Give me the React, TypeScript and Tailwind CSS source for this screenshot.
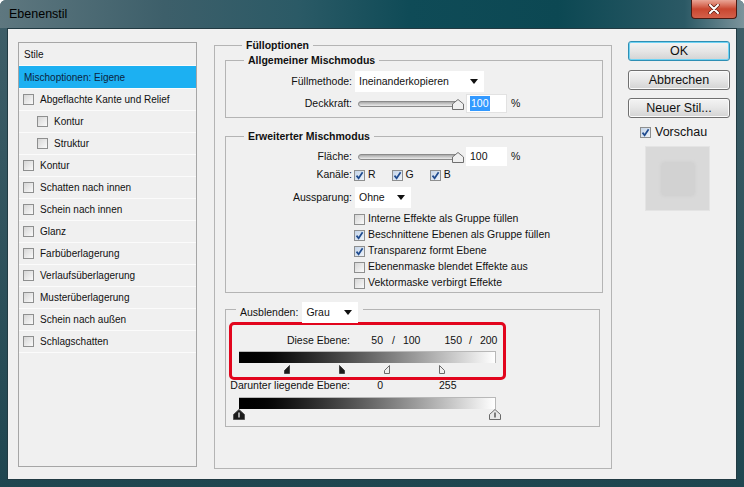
import React from 'react';

const F = "font-['Liberation_Sans',Arial,sans-serif]";

function Check({ on = false, className = '' }: { on?: boolean; className?: string }) {
  return (
    <span
      className={`relative inline-block w-[11px] h-[11px] shrink-0 border border-[#8e8f8f] ${
        on ? 'bg-linear-to-br from-[#c4d4e8] to-[#eef3f9]' : 'bg-linear-to-br from-[#d6d6d6] to-[#fafafa]'
      } ${className}`}
    >
      {on && (
        <svg viewBox="0 0 9 9" className="absolute inset-0 w-[9px] h-[9px]">
          <path d="M1.5 4.6 L3.6 7.2 L7.6 1.2" fill="none" stroke="#1f4b8f" strokeWidth="1.7" />
        </svg>
      )}
    </span>
  );
}

function Select({ value, className = '' }: { value: string; className?: string }) {
  return (
    <div className={`flex items-center h-[21px] bg-white pl-[4px] pr-[6px] ${className}`}>
      <span className="text-[10.5px]">{value}</span>
      <svg className="ml-auto" width="8" height="5" viewBox="0 0 8 5">
        <path d="M0 0 H8 L4 5 Z" fill="#111" />
      </svg>
    </div>
  );
}

function Slider() {
  return (
    <div className="relative flex items-center w-[106px] h-[14px]">
      <div className="w-[100px] h-[6px] rounded-full border border-[#8a8a8a] bg-linear-to-b from-[#a9a9a9] to-[#ececec]" />
      {/* thumb */}
      <svg className="absolute left-[94px] top-[2px]" width="12" height="11" viewBox="0 0 12 11">
        <path d="M6 0.5 L11.5 5 L11.5 10.5 L0.5 10.5 L0.5 5 Z" fill="#efefef" stroke="#6f6f6f" />
      </svg>
    </div>
  );
}

function Half({ left, dark, flip }: { left: number; dark?: boolean; flip?: boolean }) {
  // flip = vertical edge on the left side
  const d = flip ? 'M0.5 0.5 L0.5 8.5 L5.5 8.5 L5.5 5.5 Z' : 'M5.5 0.5 L5.5 8.5 L0.5 8.5 L0.5 5.5 Z';
  return (
    <svg className="absolute top-0" style={{ left }} width="6" height="9" viewBox="0 0 6 9">
      <path d={d} fill={dark ? '#1c1c1c' : '#efefef'} stroke={dark ? '#444' : '#6a6a6a'} />
    </svg>
  );
}

function Thumb({ left, dark }: { left: number; dark?: boolean }) {
  return (
    <svg className="absolute top-0" style={{ left }} width="12" height="11" viewBox="0 0 12 11">
      <path d="M6 0.5 L11.5 5.5 L11.5 10.5 L0.5 10.5 L0.5 5.5 Z" fill={dark ? '#1a1a1a' : '#e8e8e8'} stroke={dark ? '#555' : '#6a6a6a'} />
      <path d="M6 3.5 V8.5" stroke={dark ? '#fff' : '#333'} strokeWidth="1.2" />
    </svg>
  );
}

const styles: { label: string; sub?: boolean }[] = [
  { label: 'Abgeflachte Kante und Relief' },
  { label: 'Kontur', sub: true },
  { label: 'Struktur', sub: true },
  { label: 'Kontur' },
  { label: 'Schatten nach innen' },
  { label: 'Schein nach innen' },
  { label: 'Glanz' },
  { label: 'Farbüberlagerung' },
  { label: 'Verlaufsüberlagerung' },
  { label: 'Musterüberlagerung' },
  { label: 'Schein nach außen' },
  { label: 'Schlagschatten' },
];

const options: { label: string; on: boolean }[] = [
  { label: 'Interne Effekte als Gruppe füllen', on: false },
  { label: 'Beschnittene Ebenen als Gruppe füllen', on: true },
  { label: 'Transparenz formt Ebene', on: true },
  { label: 'Ebenenmaske blendet Effekte aus', on: false },
  { label: 'Vektormaske verbirgt Effekte', on: false },
];

function Button({ children, primary }: { children: React.ReactNode; primary?: boolean }) {
  return (
    <div
      className={`h-[20px] w-[102px] flex items-center justify-center rounded-[3px] border text-[12.5px] text-[#111] bg-linear-to-b from-[#f4f4f4] via-[#e6e6e6] to-[#d3d3d3] ${
        primary ? 'border-[#2f8fb4] shadow-[inset_0_0_0_1px_#6fd3f4]' : 'border-[#707070] shadow-[inset_0_0_0_1px_#fbfbfb]'
      }`}
    >
      {children}
    </div>
  );
}

export default function App() {
  return (
    <div className={`${F} w-[744px] h-[487px] flex flex-col overflow-hidden rounded-t-[6px] bg-linear-to-b from-[#3f5f69] to-[#1f4650] text-[#111] select-none`}>
      {/* title bar */}
      <div className="h-[28px] shrink-0 flex items-start bg-[linear-gradient(90deg,#5e777f_0%,#3d5f6a_22%,#2b5a66_40%,#0f4b57_55%,#0c4853_75%,#2b5965_92%,#7c949c_100%)]">
        <span className="pl-[9px] pt-[5px] text-[12.5px] text-black">Ebenenstil</span>
        <div className="ml-auto mr-[7px] w-[46px] h-[19px] flex items-center justify-center rounded-b-[4px] border border-t-0 border-[#4a1a12] bg-linear-to-b from-[#e9a596] via-[#c9462f] to-[#d4604a]">
          <svg width="12" height="10" viewBox="0 0 12 10">
            <path d="M2 1 L10 9 M10 1 L2 9" stroke="#5a1a10" strokeWidth="3.4" strokeLinecap="round" />
            <path d="M2 1 L10 9 M10 1 L2 9" stroke="#fff" strokeWidth="2" strokeLinecap="round" />
          </svg>
        </div>
      </div>

      {/* client */}
      <div className="flex-1 flex px-[7px] pb-[7px]">
        <div className="flex-1 flex bg-[#f0f0f0] border border-[#213a42] pl-[10px] pt-[13px] text-[10.5px]">
          {/* styles list */}
          <div className="w-[179px] h-[425px] border border-[#a6a6a6] bg-[#f0f0f0] text-[10px]">
            <div className="h-[23px] flex items-center pl-[5px] border-b border-[#fbfbfb]">Stile</div>
            <div className="h-[23px] flex items-center pl-[5px] bg-[#1cb0f2] text-[#0b2440] border-b border-[#fbfbfb]">
              Mischoptionen: Eigene
            </div>
            {styles.map((s, i) => (
              <div key={i} className={`h-[22px] flex items-center border-b border-[#fbfbfb] ${s.sub ? 'pl-[18px]' : 'pl-[4px]'}`}>
                <Check />
                <span className="ml-[6px]">{s.label}</span>
              </div>
            ))}
          </div>

          {/* Fülloptionen */}
          <fieldset className="ml-[17px] mt-[-3px] w-[398px] h-[430px] border border-[#b4b4b4] pl-[10px]">
            <legend className="ml-[17px] px-[4px] font-bold text-[10.5px] leading-[12px]">Fülloptionen</legend>

            <fieldset className="mt-[3px] w-[378px] border border-[#b4b4b4] pb-[4px]">
              <legend className="ml-[18px] px-[4px] font-bold leading-[12px]">Allgemeiner Mischmodus</legend>
              <div className="flex items-center mt-[5px]">
                <span className="w-[126px] text-right">Füllmethode:</span>
                <Select value="Ineinanderkopieren" className="ml-[3px] w-[129px]" />
              </div>
              <div className="flex items-center mt-[2px] h-[19px]">
                <span className="w-[126px] text-right">Deckkraft:</span>
                <div className="ml-[6px]">
                  <Slider />
                </div>
                <div className="ml-[2px] w-[41px] h-[19px] bg-white border border-[#e2e2e2] flex items-center pl-[3px]">
                  <span className="bg-[#3399ff] text-white px-[1px]">100</span>
                </div>
                <span className="ml-[4px]">%</span>
              </div>
            </fieldset>

            <fieldset className="mt-[12px] w-[378px] border border-[#b4b4b4] pb-[1px]">
              <legend className="ml-[18px] px-[4px] font-bold leading-[12px]">Erweiterter Mischmodus</legend>
              <div className="flex items-center mt-[5px] h-[19px]">
                <span className="w-[126px] text-right">Fläche:</span>
                <div className="ml-[6px]">
                  <Slider />
                </div>
                <div className="ml-[2px] w-[41px] h-[19px] bg-white flex items-center pl-[4px]">100</div>
                <span className="ml-[4px]">%</span>
              </div>
              <div className="flex items-center h-[16px] mt-[1px]">
                <span className="w-[126px] text-right">Kanäle:</span>
                <Check on className="ml-[2px]" />
                <span className="ml-[3px]">R</span>
                <Check on className="ml-[16px]" />
                <span className="ml-[3px]">G</span>
                <Check on className="ml-[16px]" />
                <span className="ml-[3px]">B</span>
              </div>
              <div className="flex items-center mt-[4px]">
                <span className="w-[126px] text-right">Aussparung:</span>
                <Select value="Ohne" className="ml-[3px] w-[56px]" />
              </div>
              <div className="mt-[3px]">
                {options.map((o, i) => (
                  <div key={i} className="flex items-center h-[16px] pl-[128px]">
                    <Check on={o.on} />
                    <span className="ml-[3px]">{o.label}</span>
                  </div>
                ))}
              </div>
            </fieldset>

            <fieldset className="mt-[3px] w-[375px] border border-[#b4b4b4] pb-[6px]">
              <legend className="ml-[10px] pl-[4px] pr-[5px] pt-[6px]">
                <span className="flex items-center">
                  <span>Ausblenden:</span>
                  <Select value="Grau" className="ml-[4px] w-[56px]" />
                </span>
              </legend>

              <div className="ml-[3px] mt-[-1px] w-[277px] h-[58px] border-[3px] border-[#e2051d] rounded-[5px] pt-[10px]">
                <div className="flex items-center h-[12px]">
                  <span className="w-[118px] text-right">Diese Ebene:</span>
                  <span className="w-[33px] text-right">50</span>
                  <span className="ml-[9px]">/</span>
                  <span className="ml-[8px]">100</span>
                  <span className="ml-[24px]">150</span>
                  <span className="ml-[7px]">/</span>
                  <span className="ml-[8px]">200</span>
                </div>
                <div className="ml-[7px] mt-[4px] w-[257px] h-[12px] border-t border-r border-[#b8b8b8] bg-linear-to-r from-black to-white" />
                <div className="relative ml-[7px] mt-[2px] w-[256px] h-[9px]">
                  <Half left={45} dark />
                  <Half left={100} dark flip />
                  <Half left={145} />
                  <Half left={200} flip />
                </div>
              </div>

              <div className="flex items-center h-[12px]">
                <span className="w-[124px] text-right">Darunter liegende Ebene:</span>
                <span className="w-[33px] text-right">0</span>
                <span className="ml-[56px]">255</span>
              </div>
              <div className="ml-[13px] mt-[5px] w-[257px] h-[12px] border-t border-r border-[#b8b8b8] bg-linear-to-r from-black to-white" />
              <div className="relative ml-[13px] w-[262px] h-[11px]">
                <Thumb left={-6} dark />
                <Thumb left={250} />
              </div>
            </fieldset>
          </fieldset>

          {/* buttons */}
          <div className="ml-[16px] flex flex-col">
            <div className="mt-[-1px]">
              <Button primary>OK</Button>
            </div>
            <div className="mt-[9px]">
              <Button>Abbrechen</Button>
            </div>
            <div className="mt-[8px]">
              <Button>Neuer Stil...</Button>
            </div>
            <div className="mt-[7px] ml-[12px] flex items-center h-[14px]">
              <Check on />
              <span className="ml-[4px] text-[12.5px]">Vorschau</span>
            </div>
            <div className="mt-[7px] ml-[17px] w-[65px] h-[65px] border border-[#e4e4e4] bg-[#d9d9d9] flex items-center justify-center">
              <div className="w-[32px] h-[32px] bg-[#d2d2d2] shadow-[0_0_4px_#c8c8c8]" />
            </div>
          </div>
        </div>
      </div>
    </div>
  );
}
